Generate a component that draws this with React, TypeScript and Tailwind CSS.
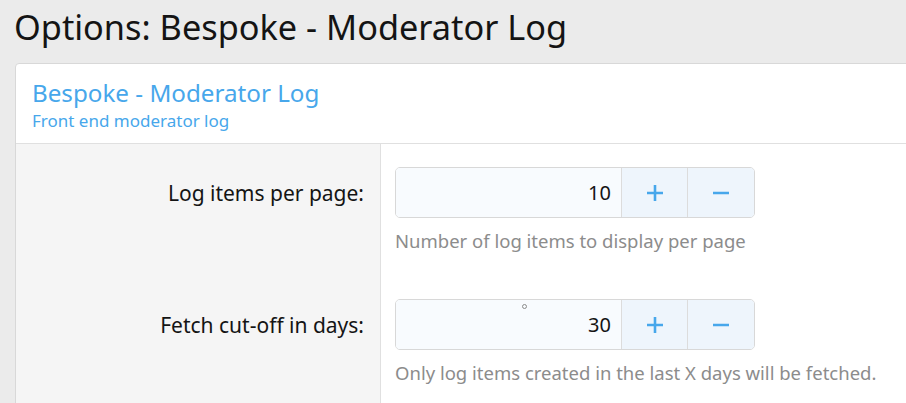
import { useState } from "react";

const font = { fontFamily: '"Noto Sans", "Open Sans", sans-serif' };

function PlusIcon() {
  return (
    <svg width="20" height="20" viewBox="0 0 20 20" className="text-[#47a7eb]">
      <path d="M10 2v16M2 10h16" stroke="currentColor" strokeWidth="2.6" />
    </svg>
  );
}

function MinusIcon() {
  return (
    <svg width="20" height="20" viewBox="0 0 20 20" className="text-[#47a7eb]">
      <path d="M2 10h16" stroke="currentColor" strokeWidth="2.6" />
    </svg>
  );
}

function NumberBox({ value, marker }: { value: number; marker?: boolean }) {
  const [n, setN] = useState(value);
  return (
    <div className="relative flex h-[51px] w-[360px] overflow-hidden rounded-[5px] border border-[#d8d8d8]">
      <div className="flex flex-1 items-center justify-end bg-[#f8fbfe] pr-[10px] text-[20px] text-[#141414]">
        {n}
      </div>
      {/* stray cursor ring seen in the capture */}
      {marker && (
        <span className="absolute left-[126px] top-[4px] h-[5px] w-[5px] rounded-full border border-[#8a8a8a]" />
      )}
      <button
        onClick={() => setN(n + 1)}
        className="flex w-[66px] items-center justify-center border-l border-[#dcdcdc] bg-[#eef5fc]"
      >
        <PlusIcon />
      </button>
      <button
        onClick={() => setN(Math.max(0, n - 1))}
        className="flex w-[67px] items-center justify-center border-l border-[#dcdcdc] bg-[#eef5fc]"
      >
        <MinusIcon />
      </button>
    </div>
  );
}

function OptionRow({
  label,
  value,
  hint,
  marker,
}: {
  label: string;
  value: number;
  hint: string;
  marker?: boolean;
}) {
  return (
    <div className="grid grid-cols-[364px_1fr]">
      <div className="flex h-[132px] items-start justify-end bg-[#f5f5f5] pr-[16px] pt-[35px] text-[21px] leading-[28px] text-[#141414]">
        {label}
      </div>
      <div className="border-l border-[#e0e0e0] pl-[14px] pt-[23px]">
        <NumberBox value={value} marker={marker} />
        <p className="mt-[10px] text-[18.5px] leading-[26px] text-[#8c8c8c]">{hint}</p>
      </div>
    </div>
  );
}

export default function App() {
  return (
    <div className="h-[403px] w-[906px] overflow-hidden bg-[#ebebeb]" style={font}>
      <h1 className="pl-[14px] pt-[1px] text-[34.3px] leading-[52px] text-[#141414]">
        Options: Bespoke - Moderator Log
      </h1>
      <div className="ml-[15px] mt-[10px] w-[1000px] rounded-t-[4px] border border-[#d8d8d8] bg-white">
        <div className="h-[80px] border-b border-[#e0e0e0] px-[16px] pt-[13px]">
          <h2 className="text-[24.2px] leading-[32px] text-[#47a7eb]">Bespoke - Moderator Log</h2>
          <p className="mt-[1px] text-[17px] leading-[22px] text-[#47a7eb]">Front end moderator log</p>
        </div>
        <OptionRow
          label="Log items per page:"
          value={10}
          hint="Number of log items to display per page"
        />
        <OptionRow
          label="Fetch cut-off in days:"
          value={30}
          hint="Only log items created in the last X days will be fetched."
          marker
        />
      </div>
    </div>
  );
}
